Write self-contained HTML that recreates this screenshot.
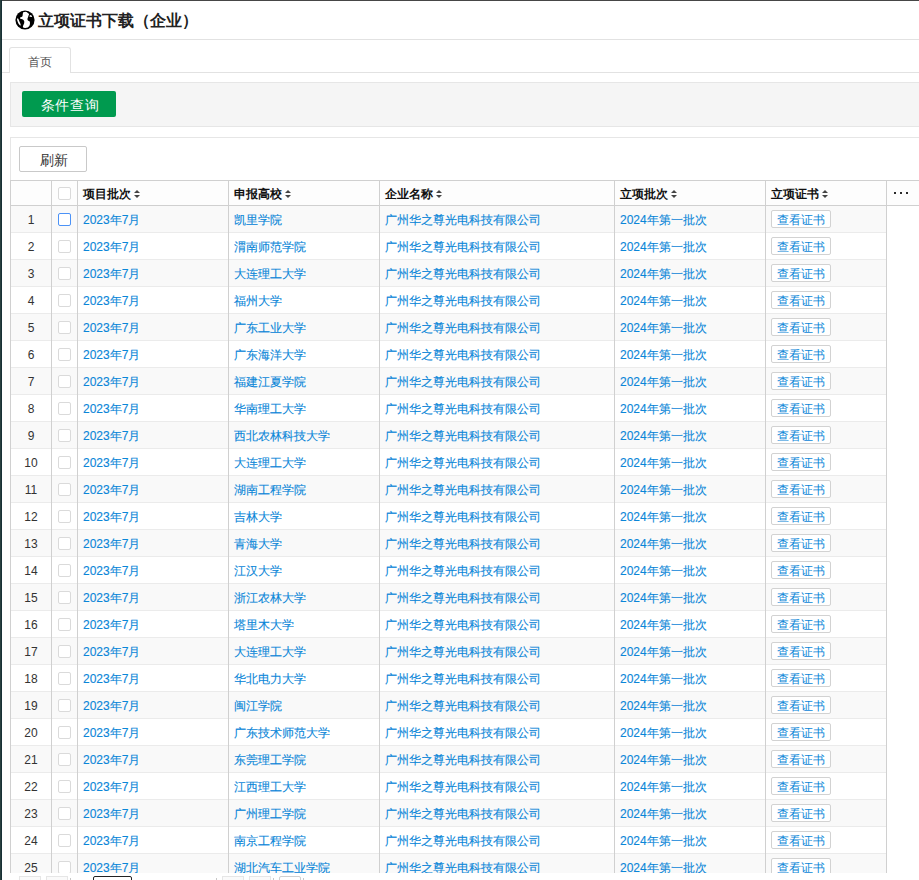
<!DOCTYPE html>
<html><head><meta charset="utf-8">
<style>
*{margin:0;padding:0;box-sizing:border-box;}
html,body{width:919px;height:880px;overflow:hidden;background:#fff;}
body{position:relative;font-family:"Liberation Sans",sans-serif;font-size:12px;color:#333;}
.abs{position:absolute;}
#topline{position:absolute;left:0;top:0;width:919px;height:1px;background:#464646;}
#lbar{position:absolute;left:0;top:0;width:2px;height:880px;background:#173035;border-left:1px solid #29403f;}
#title{position:absolute;left:38px;top:9px;font-size:16px;font-weight:bold;color:#222;line-height:24px;white-space:nowrap;}
#globe{position:absolute;left:13px;top:8px;width:24px;height:24px;}
#sep1{position:absolute;left:2px;top:39px;width:917px;height:1px;background:#e2e2e2;}
#tabline{position:absolute;left:2px;top:72px;width:917px;height:1px;background:#e2e2e2;}
#tab{position:absolute;left:9px;top:47px;width:62px;height:26px;background:#fff;border:1px solid #e2e2e2;border-bottom:none;border-radius:3px 3px 0 0;text-align:center;line-height:28px;color:#555;font-size:12px;}
#qpanel{position:absolute;left:10px;top:82px;width:920px;height:45px;background:#f5f5f5;border:1px solid #e6e6e6;}
#qbtn{position:absolute;left:22px;top:91px;width:94px;height:26px;background:#009a4f;border-radius:2px;color:#fff;font-size:14px;line-height:28px;letter-spacing:0.7px;padding-left:2px;text-align:center;}
#tpanel{position:absolute;left:10px;top:137px;width:920px;height:760px;background:#fff;border:1px solid #e6e6e6;}
#rbtn{position:absolute;left:19px;top:146px;width:68px;height:26px;background:#fff;border:1px solid #c9c9c9;border-radius:2px;color:#333;font-size:14px;line-height:26px;text-align:center;padding-left:1px;}
#thead{position:absolute;left:10px;top:180px;width:909px;height:26px;border-top:1px solid #d0d0d0;border-bottom:1px solid #d0d0d0;background:#fdfdfd;}
.vl{position:absolute;width:1px;background:#d0d0d0;}
.h{position:absolute;top:1px;height:24px;line-height:24px;font-weight:bold;color:#111;font-size:12px;white-space:nowrap;}
.srt{display:inline-block;position:relative;width:6px;height:8px;margin-left:3px;vertical-align:middle;top:-1px;}
.srt i{position:absolute;left:0;width:0;height:0;border-left:3px solid transparent;border-right:3px solid transparent;}
.srt .up{top:0;border-bottom:3px solid #444;}
.srt .dn{top:5px;border-top:3px solid #444;}
.r{position:absolute;left:10px;width:876px;height:27px;border-bottom:1px solid #ebebeb;background:#fff;}
.r.odd{background:#f9f9f9;}
.r .c0{position:absolute;left:1px;width:40px;top:0px;height:26px;line-height:28px;text-align:center;color:#333;font-size:12px;}
.cb{position:absolute;left:48px;top:7px;width:13px;height:13px;border:1px solid #dadada;background:#fff;border-radius:2px;}
.cb.hov{border-color:#4b92f7;}
.t{position:absolute;top:0px;height:26px;line-height:28px;color:#0a86d8;white-space:nowrap;font-size:12px;-webkit-text-stroke:0.12px #0a86d8;}
.c2{left:73px;} .c3{left:224px;} .c4{left:375px;} .c5{left:610px;}
.btn2{position:absolute;left:761px;top:4px;width:60px;height:18px;border:1px solid #d2d2d2;border-radius:2px;background:#fff;color:#0a86d8;font-size:12px;line-height:18px;text-align:center;}
#bodyclip{position:absolute;left:10px;top:206px;width:909px;height:667px;overflow:hidden;}
#bodyclip .r{left:0;}
.dot{position:absolute;top:11px;width:2px;height:2px;background:#2a2a2a;}
.pg{position:absolute;top:876px;height:10px;}
</style></head><body>
<div id="topline"></div>
<div id="lbar"></div>
<svg id="globe" viewBox="0 0 24 24"><circle cx="12" cy="12" r="9.6" fill="#000"/><path fill="#fff" d="M9.95,4.95 L10.18,4.27 L12.68,3.82 L14.05,4.27 L14.73,4.95 L15.64,5.41 L16.09,6.43 L15.64,7.23 L15.18,8.82 L14.73,9.95 L14.39,11.09 L14.73,12.23 L15.64,12.91 L16.55,13.36 L17,14.73 L16.77,17 L16.09,18.36 L14.73,19.5 L12.23,19.95 L10.41,19.73 L9.84,18.59 L10.41,17 L11.09,15.41 L11.32,13.82 L10.86,12.45 L9.95,11.55 L8.59,11.09 L7.23,10.64 L7,9.73 L7.68,9.27 L8.59,9.05 L9.5,8.14 L9.73,6.55 Z M16.32,8.36 L16.77,7.45 L17.91,7.11 L18.82,7.91 L19.05,8.82 L18.36,9.05 L17,8.82 Z M4.05,10.64 L4.95,10.18 L5.64,11.55 L6.32,13.36 L7,14.73 L7.68,16.55 L7.45,17.68 L6.55,17 L5.41,15.41 L4.5,13.36 L4.05,11.77 Z"/></svg>
<div id="title">立项证书下载（企业）</div>
<div id="sep1"></div>
<div id="tabline"></div>
<div id="tab">首页</div>
<div id="qpanel"></div>
<div id="qbtn">条件查询</div>
<div id="tpanel"></div>
<div id="rbtn">刷新</div>
<div id="thead">
  <div class="cb" style="left:48px;top:6px"></div>
  <div class="h" style="left:73px">项目批次<span class="srt"><i class="up"></i><i class="dn"></i></span></div>
  <div class="h" style="left:224px">申报高校<span class="srt"><i class="up"></i><i class="dn"></i></span></div>
  <div class="h" style="left:375px">企业名称<span class="srt"><i class="up"></i><i class="dn"></i></span></div>
  <div class="h" style="left:610px">立项批次<span class="srt"><i class="up"></i><i class="dn"></i></span></div>
  <div class="h" style="left:761px">立项证书<span class="srt"><i class="up"></i><i class="dn"></i></span></div>
  <div class="dot" style="left:884px"></div><div class="dot" style="left:890px"></div><div class="dot" style="left:896px"></div>
</div>
<div id="bodyclip">
<div style="position:absolute;left:0;top:-206px;width:909px;height:1100px;">
<div class="r odd" style="top:206px"><div class="c0">1</div><div class="cb hov"></div><div class="t c2">2023年7月</div><div class="t c3">凯里学院</div><div class="t c4">广州华之尊光电科技有限公司</div><div class="t c5">2024年第一批次</div><div class="btn2">查看证书</div></div>
<div class="r" style="top:233px"><div class="c0">2</div><div class="cb"></div><div class="t c2">2023年7月</div><div class="t c3">渭南师范学院</div><div class="t c4">广州华之尊光电科技有限公司</div><div class="t c5">2024年第一批次</div><div class="btn2">查看证书</div></div>
<div class="r odd" style="top:260px"><div class="c0">3</div><div class="cb"></div><div class="t c2">2023年7月</div><div class="t c3">大连理工大学</div><div class="t c4">广州华之尊光电科技有限公司</div><div class="t c5">2024年第一批次</div><div class="btn2">查看证书</div></div>
<div class="r" style="top:287px"><div class="c0">4</div><div class="cb"></div><div class="t c2">2023年7月</div><div class="t c3">福州大学</div><div class="t c4">广州华之尊光电科技有限公司</div><div class="t c5">2024年第一批次</div><div class="btn2">查看证书</div></div>
<div class="r odd" style="top:314px"><div class="c0">5</div><div class="cb"></div><div class="t c2">2023年7月</div><div class="t c3">广东工业大学</div><div class="t c4">广州华之尊光电科技有限公司</div><div class="t c5">2024年第一批次</div><div class="btn2">查看证书</div></div>
<div class="r" style="top:341px"><div class="c0">6</div><div class="cb"></div><div class="t c2">2023年7月</div><div class="t c3">广东海洋大学</div><div class="t c4">广州华之尊光电科技有限公司</div><div class="t c5">2024年第一批次</div><div class="btn2">查看证书</div></div>
<div class="r odd" style="top:368px"><div class="c0">7</div><div class="cb"></div><div class="t c2">2023年7月</div><div class="t c3">福建江夏学院</div><div class="t c4">广州华之尊光电科技有限公司</div><div class="t c5">2024年第一批次</div><div class="btn2">查看证书</div></div>
<div class="r" style="top:395px"><div class="c0">8</div><div class="cb"></div><div class="t c2">2023年7月</div><div class="t c3">华南理工大学</div><div class="t c4">广州华之尊光电科技有限公司</div><div class="t c5">2024年第一批次</div><div class="btn2">查看证书</div></div>
<div class="r odd" style="top:422px"><div class="c0">9</div><div class="cb"></div><div class="t c2">2023年7月</div><div class="t c3">西北农林科技大学</div><div class="t c4">广州华之尊光电科技有限公司</div><div class="t c5">2024年第一批次</div><div class="btn2">查看证书</div></div>
<div class="r" style="top:449px"><div class="c0">10</div><div class="cb"></div><div class="t c2">2023年7月</div><div class="t c3">大连理工大学</div><div class="t c4">广州华之尊光电科技有限公司</div><div class="t c5">2024年第一批次</div><div class="btn2">查看证书</div></div>
<div class="r odd" style="top:476px"><div class="c0">11</div><div class="cb"></div><div class="t c2">2023年7月</div><div class="t c3">湖南工程学院</div><div class="t c4">广州华之尊光电科技有限公司</div><div class="t c5">2024年第一批次</div><div class="btn2">查看证书</div></div>
<div class="r" style="top:503px"><div class="c0">12</div><div class="cb"></div><div class="t c2">2023年7月</div><div class="t c3">吉林大学</div><div class="t c4">广州华之尊光电科技有限公司</div><div class="t c5">2024年第一批次</div><div class="btn2">查看证书</div></div>
<div class="r odd" style="top:530px"><div class="c0">13</div><div class="cb"></div><div class="t c2">2023年7月</div><div class="t c3">青海大学</div><div class="t c4">广州华之尊光电科技有限公司</div><div class="t c5">2024年第一批次</div><div class="btn2">查看证书</div></div>
<div class="r" style="top:557px"><div class="c0">14</div><div class="cb"></div><div class="t c2">2023年7月</div><div class="t c3">江汉大学</div><div class="t c4">广州华之尊光电科技有限公司</div><div class="t c5">2024年第一批次</div><div class="btn2">查看证书</div></div>
<div class="r odd" style="top:584px"><div class="c0">15</div><div class="cb"></div><div class="t c2">2023年7月</div><div class="t c3">浙江农林大学</div><div class="t c4">广州华之尊光电科技有限公司</div><div class="t c5">2024年第一批次</div><div class="btn2">查看证书</div></div>
<div class="r" style="top:611px"><div class="c0">16</div><div class="cb"></div><div class="t c2">2023年7月</div><div class="t c3">塔里木大学</div><div class="t c4">广州华之尊光电科技有限公司</div><div class="t c5">2024年第一批次</div><div class="btn2">查看证书</div></div>
<div class="r odd" style="top:638px"><div class="c0">17</div><div class="cb"></div><div class="t c2">2023年7月</div><div class="t c3">大连理工大学</div><div class="t c4">广州华之尊光电科技有限公司</div><div class="t c5">2024年第一批次</div><div class="btn2">查看证书</div></div>
<div class="r" style="top:665px"><div class="c0">18</div><div class="cb"></div><div class="t c2">2023年7月</div><div class="t c3">华北电力大学</div><div class="t c4">广州华之尊光电科技有限公司</div><div class="t c5">2024年第一批次</div><div class="btn2">查看证书</div></div>
<div class="r odd" style="top:692px"><div class="c0">19</div><div class="cb"></div><div class="t c2">2023年7月</div><div class="t c3">闽江学院</div><div class="t c4">广州华之尊光电科技有限公司</div><div class="t c5">2024年第一批次</div><div class="btn2">查看证书</div></div>
<div class="r" style="top:719px"><div class="c0">20</div><div class="cb"></div><div class="t c2">2023年7月</div><div class="t c3">广东技术师范大学</div><div class="t c4">广州华之尊光电科技有限公司</div><div class="t c5">2024年第一批次</div><div class="btn2">查看证书</div></div>
<div class="r odd" style="top:746px"><div class="c0">21</div><div class="cb"></div><div class="t c2">2023年7月</div><div class="t c3">东莞理工学院</div><div class="t c4">广州华之尊光电科技有限公司</div><div class="t c5">2024年第一批次</div><div class="btn2">查看证书</div></div>
<div class="r" style="top:773px"><div class="c0">22</div><div class="cb"></div><div class="t c2">2023年7月</div><div class="t c3">江西理工大学</div><div class="t c4">广州华之尊光电科技有限公司</div><div class="t c5">2024年第一批次</div><div class="btn2">查看证书</div></div>
<div class="r odd" style="top:800px"><div class="c0">23</div><div class="cb"></div><div class="t c2">2023年7月</div><div class="t c3">广州理工学院</div><div class="t c4">广州华之尊光电科技有限公司</div><div class="t c5">2024年第一批次</div><div class="btn2">查看证书</div></div>
<div class="r" style="top:827px"><div class="c0">24</div><div class="cb"></div><div class="t c2">2023年7月</div><div class="t c3">南京工程学院</div><div class="t c4">广州华之尊光电科技有限公司</div><div class="t c5">2024年第一批次</div><div class="btn2">查看证书</div></div>
<div class="r odd" style="top:854px"><div class="c0">25</div><div class="cb"></div><div class="t c2">2023年7月</div><div class="t c3">湖北汽车工业学院</div><div class="t c4">广州华之尊光电科技有限公司</div><div class="t c5">2024年第一批次</div><div class="btn2">查看证书</div></div>
</div>
</div>
<div class="vl" style="left:10px;top:180px;height:693px"></div>
<div class="vl" style="left:51px;top:180px;height:693px"></div>
<div class="vl" style="left:77px;top:180px;height:693px"></div>
<div class="vl" style="left:228px;top:180px;height:693px"></div>
<div class="vl" style="left:379px;top:180px;height:693px"></div>
<div class="vl" style="left:614px;top:180px;height:693px"></div>
<div class="vl" style="left:765px;top:180px;height:693px"></div>
<div class="vl" style="left:886px;top:180px;height:693px"></div>
<div style="position:absolute;left:10px;top:873px;width:909px;height:7px;background:#fff;"></div>
<div class="pg" style="left:19px;width:22px;border:1px solid #e6e6e6;background:#fafafa;"></div>
<div class="pg" style="left:46px;width:22px;border:1px solid #e6e6e6;background:#fafafa;"></div>
<div class="pg" style="left:70px;top:878px;width:1px;background:#c8c8c8;"></div>
<div class="pg" style="left:93px;width:39px;border:1px solid #222;border-radius:2px;background:#fff;"></div>
<div class="pg" style="left:216px;top:878px;width:1px;background:#c8c8c8;"></div>
<div class="pg" style="left:222px;width:22px;border:1px solid #e6e6e6;background:#fafafa;"></div>
<div class="pg" style="left:249px;width:22px;border:1px solid #e6e6e6;background:#fafafa;"></div>
<div class="pg" style="left:273px;top:878px;width:1px;background:#c8c8c8;"></div>
<div class="pg" style="left:279px;width:22px;border:1px solid #d0d0d0;border-radius:2px;background:#fff;"></div>
<div class="pg" style="left:303px;top:878px;width:1px;background:#c8c8c8;"></div>
</body></html>
